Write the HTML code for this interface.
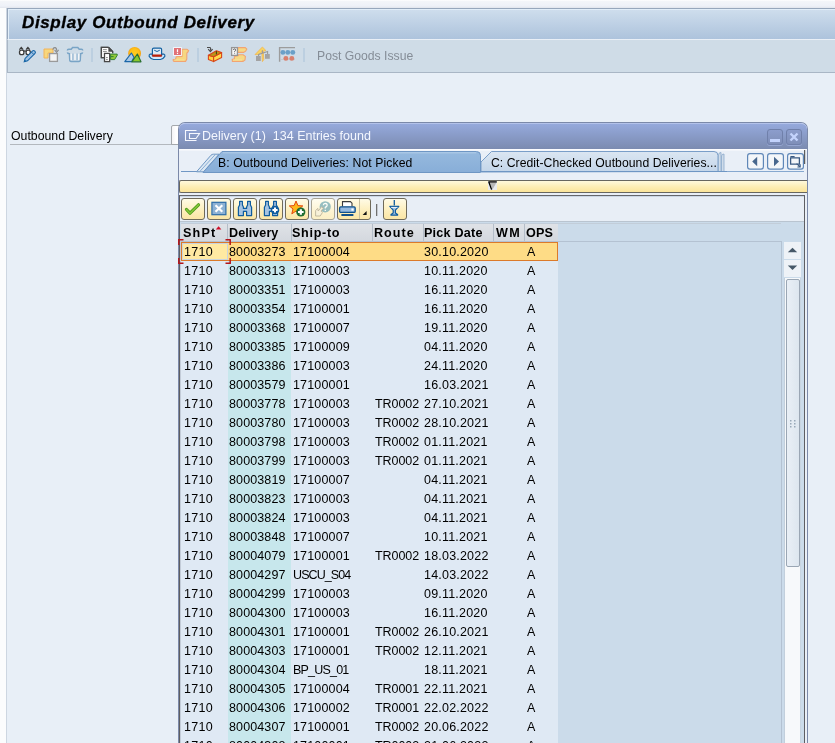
<!DOCTYPE html>
<html><head><meta charset="utf-8">
<style>
*{margin:0;padding:0;box-sizing:border-box}
html,body{width:835px;height:743px;overflow:hidden;background:#fbfcfd;font-family:"Liberation Sans",sans-serif;font-size:12px;color:#000}
.a{position:absolute}
#topstrip{left:0;top:0;width:835px;height:8px;background:linear-gradient(#fefefe 0px,#f3f5f9 1.5px,#eef1f8 6px,#e2e5ec 8px)}
#frame{left:6px;top:8px;width:829px;height:735px;background:#e8eff7;border-left:1px solid #cdd6e1}
#titlebar{left:7px;top:8px;width:828px;height:31px;border-top:1px solid #97a7bc;border-left:1px solid #97a7bc;background:linear-gradient(#cfdeed,#adc3dc)}
#titlebar:before{content:"";position:absolute;left:0;top:0;right:0;height:1px;background:#e2eef9}
#titlebar:after{content:"";position:absolute;left:0;top:0;bottom:0;width:1px;background:#e2eef9}
#title{left:22px;top:13px;font-weight:bold;font-style:italic;font-size:17px;white-space:nowrap;letter-spacing:0.62px;-webkit-text-stroke:0.35px #000}
#toolbar{left:7px;top:39px;width:828px;height:34px;background:#cfdce7;border-top:1px solid #e9eff6;border-bottom:1px solid #a9b6c5;border-left:1px solid #a9b6c5}
.sep{width:1px;height:14px;background:#a9c0d8}
#pgi{left:317px;top:49px;color:#858d97;font-size:12.2px;white-space:nowrap}
#lbl{left:11px;top:129px;font-size:12.3px;white-space:nowrap}
#lblline{left:10px;top:144px;width:168px;height:1px;background:#b3b8be}
#inp{left:171px;top:125px;width:12px;height:20px;background:linear-gradient(to right,#f4f4f6,#fff 40%);border:1px solid #a4a8ac;border-radius:2px 0 0 0}

/* dialog */
#dlg{left:178px;top:122px;width:630px;height:621px;background:#e8eef6;border:1px solid #7b89a9;border-bottom:none;border-radius:7px 7px 0 0}
#dtitle{left:179px;top:123px;width:628px;height:26px;border-radius:6px 6px 0 0;background:linear-gradient(#95a9dc,#7b8bb0);border-top:1px solid #b3c2ea}
#dtitletxt{left:202px;top:129px;color:#f4f7ff;font-size:12.5px;white-space:nowrap}
#dtwhite{left:179px;top:149px;width:628px;height:2px;background:#fbfcfe}

#dtabs{left:179px;top:149px;width:628px;height:594px;background:#e9eff7}
.tabtxt{white-space:nowrap;font-size:12.2px;letter-spacing:0.04px}
#ybar{left:179px;top:180px;width:628px;height:13px;border:1px solid #67665f;border-right:none;border-radius:2px 0 0 2px;background:linear-gradient(#fff9dc 0%,#fdeeb6 50%,#fbe49a 100%)}
#grid{left:179px;top:195px;width:626px;height:548px;border-left:1px solid #5e5e62;border-top:1px solid #66666a;border-right:1px solid #5e5e62;background:#cbdbea}
#gtb{left:180px;top:196px;width:624px;height:26px;background:#e8eef6;border-top:1px solid #cad6e4;border-bottom:1px solid #b9c4d0}
#hline{left:181px;top:223px;width:600px;height:1px;background:#c2cdd9}
.btn{position:absolute;top:198px;height:22px;border:1px solid #6f6a5a;border-radius:3px;background:linear-gradient(#fffbe6,#fdeebb 60%,#fbe6a6)}
#hdr{left:181px;top:224px;width:377px;height:17px;background:linear-gradient(#dfe2e7,#d4d8de)}
.h{position:absolute;top:0;height:18px;font-style:normal;font-weight:bold;font-size:12.6px;line-height:18px;white-space:nowrap;letter-spacing:0.35px}
.hs{position:absolute;top:0;width:1px;height:17px;background:#b4bdc8}
.r{position:absolute;left:181px;width:377px;height:19px;background:linear-gradient(to right,#dfe9f4 47px,#c7e7ec 47px,#c7e7ec 110px,#dfe9f4 110px)}
.r i{position:absolute;top:1px;font-style:normal;font-size:12.5px;line-height:19px;white-space:nowrap;letter-spacing:0.3px}
.c1{left:3px}.c2{left:48px;letter-spacing:0.12px!important}.c3{left:112px;letter-spacing:0.16px!important}.c4{left:194px;letter-spacing:-0.05px!important}.c5{left:243px;letter-spacing:0.2px!important}.c7{left:346px}
.r .bgk{position:absolute;left:47px;top:0;width:63px;height:19px;background:#c7e7ec}
.r.sel{background:#fedc86;border:1px solid #dc7a2a}
.r.sel i{top:0;margin-left:-1px}
.fc{position:absolute;left:0;top:0;width:46px;height:17px;background:#ffe9a2;border:1px solid #c9d3dc}
#gbody{left:181px;top:241px;width:601px;height:502px;border-right:1px solid #b4c2d2;border-top:1px solid #b4c2d2}

.tbtn{width:16px;height:16px;border:1px solid #7080aa;border-radius:3px;background:linear-gradient(#8c9dcc,#7f8fb8);box-shadow:0 1px 0 #95a5d0}
.nbtn{width:17px;height:17px;border:1px solid #6a8cb8;border-radius:2px;background:#fff}
#title,#pgi,#lbl,#dtitletxt,.tabtxt,#hdr,.r{will-change:transform}
</style></head><body>
<div id="topstrip" class="a"></div>
<div id="frame" class="a"></div>
<div id="titlebar" class="a"></div>
<div id="title" class="a">Display Outbound Delivery</div>
<div id="toolbar" class="a"></div>
<div id="pgi" class="a">Post Goods Issue</div>
<div id="lbl" class="a">Outbound Delivery</div>
<div id="lblline" class="a"></div>
<div id="inp" class="a"></div>

<div id="dlg" class="a"></div>
<div id="dtitle" class="a"></div>
<div id="dtitletxt" class="a" style="white-space:pre">Delivery (1)  134 Entries found</div>

<div id="dtabs" class="a"></div>

<svg class="a" style="left:179px;top:149px" width="628" height="31" viewBox="179 149 628 31">
<defs>
<linearGradient id="tbg" x1="0" y1="0" x2="0" y2="1"><stop offset="0" stop-color="#96b9de"/><stop offset="1" stop-color="#88aed8"/></linearGradient>
<linearGradient id="tcg" x1="0" y1="0" x2="0" y2="1"><stop offset="0" stop-color="#dbe6f2"/><stop offset="1" stop-color="#c3d5e9"/></linearGradient>
</defs>
<rect x="179" y="149" width="628" height="1.5" fill="#fbfcfe"/>
<line x1="181" y1="171.5" x2="200" y2="171.5" stroke="#7097c4" stroke-width="1"/>
<line x1="480" y1="171.5" x2="804" y2="171.5" stroke="#86a8cf" stroke-width="1"/>
<!-- ghost tabs left -->
<path d="M196.5 171.8 L211 155.2 Q212 154.2 213.5 154.2 L219 154.2 L203.5 171.8 Z" fill="#dbe7f3" stroke="#6f97c3" stroke-width="1"/>
<path d="M199.8 171.5 L215 154.8" stroke="#88acd3" stroke-width="1"/>

<!-- tab C -->
<path d="M481 172 L481 162 L491.5 151.5 L714 151.5 Q718 151.5 718 155.5 L718 171.5 Z" fill="url(#tcg)" stroke="#7a9ec8" stroke-width="1"/>
<path d="M718.5 171.5 L718.5 155 Q718.5 152.5 721 152.5 L721 171.5 Z" fill="#cfdcea" stroke="#8aa9cc" stroke-width="0.8"/>
<path d="M721.5 171.5 L721.5 156 Q721.5 154 724 154 L724 171.5 Z" fill="#cfdcea" stroke="#8aa9cc" stroke-width="0.8"/>
<line x1="481" y1="171.5" x2="727" y2="171.5" stroke="#6e96c4" stroke-width="1.2"/>
<!-- tab B -->
<path d="M203 172.5 L222 151.5 L476.5 151.5 Q480.5 151.5 480.5 155.5 L480.5 172.5 Z" fill="url(#tbg)" stroke="#6e96c4" stroke-width="1"/>
<line x1="223" y1="152.8" x2="476" y2="152.8" stroke="#b3cde8" stroke-width="1"/>
</svg>
<div class="a tabtxt" style="left:218px;top:156px;letter-spacing:0.1px">B: Outbound Deliveries: Not Picked</div>
<div class="a tabtxt" style="left:491px;top:156px">C: Credit-Checked Outbound Deliveries...</div>
<div id="ybar" class="a"></div>
<div id="grid" class="a"></div>
<div id="gtb" class="a"></div>
<div id="hline" class="a"></div>
<div class="btn" style="left:181px;width:24px"></div>
<div class="btn" style="left:207px;width:24px"></div>
<div class="btn" style="left:233px;width:24px"></div>
<div class="btn" style="left:259px;width:24px"></div>
<div class="btn" style="left:285px;width:24px"></div>
<div class="btn" style="left:311px;width:24px;border-color:#a8a496;background:linear-gradient(#fffdf0,#fdf3d2 60%,#fbefc6)"></div>
<div class="btn" style="left:337px;width:34px"></div>
<div class="btn" style="left:383px;width:24px"></div>
<div id="hdr" class="a">
<i class="h" style="left:2px;letter-spacing:1.2px">ShPt</i>
<i class="h" style="left:48px;letter-spacing:0.05px">Delivery</i>
<i class="h" style="left:111px;letter-spacing:0.7px">Ship-to</i>
<i class="h" style="left:193px;letter-spacing:1px">Route</i>
<i class="h" style="left:243px;letter-spacing:0.22px">Pick Date</i>
<i class="h" style="left:315px;letter-spacing:1.3px">WM</i>
<i class="h" style="left:345px;letter-spacing:0.1px">OPS</i>
<b class="hs" style="left:46px"></b><b class="hs" style="left:110px"></b><b class="hs" style="left:191px"></b><b class="hs" style="left:242px"></b><b class="hs" style="left:312px"></b><b class="hs" style="left:343px"></b>
</div>
<div id="gbody" class="a"></div>
<div class="a" style="left:180px;top:241px;width:1px;height:502px;background:#c3ccd8"></div>
<svg class="a" style="left:215px;top:225px" width="8" height="6" viewBox="0 0 8 6"><path d="M0.8 4.6 L3.6 1.2 L6.4 4.6 Z" fill="#d0102a"/></svg>
<div class="r sel" style="top:242px"><div class="fc"></div><i class="c1">1710</i><i class="c2">80003273</i><i class="c3">17100004</i><i class="c4"></i><i class="c5">30.10.2020</i><i class="c7">A</i></div>
<div class="r" style="top:261px"><i class="c1">1710</i><i class="c2">80003313</i><i class="c3">17100003</i><i class="c4"></i><i class="c5">10.11.2020</i><i class="c7">A</i></div>
<div class="r" style="top:280px"><i class="c1">1710</i><i class="c2">80003351</i><i class="c3">17100003</i><i class="c4"></i><i class="c5">16.11.2020</i><i class="c7">A</i></div>
<div class="r" style="top:299px"><i class="c1">1710</i><i class="c2">80003354</i><i class="c3">17100001</i><i class="c4"></i><i class="c5">16.11.2020</i><i class="c7">A</i></div>
<div class="r" style="top:318px"><i class="c1">1710</i><i class="c2">80003368</i><i class="c3">17100007</i><i class="c4"></i><i class="c5">19.11.2020</i><i class="c7">A</i></div>
<div class="r" style="top:337px"><i class="c1">1710</i><i class="c2">80003385</i><i class="c3">17100009</i><i class="c4"></i><i class="c5">04.11.2020</i><i class="c7">A</i></div>
<div class="r" style="top:356px"><i class="c1">1710</i><i class="c2">80003386</i><i class="c3">17100003</i><i class="c4"></i><i class="c5">24.11.2020</i><i class="c7">A</i></div>
<div class="r" style="top:375px"><i class="c1">1710</i><i class="c2">80003579</i><i class="c3">17100001</i><i class="c4"></i><i class="c5">16.03.2021</i><i class="c7">A</i></div>
<div class="r" style="top:394px"><i class="c1">1710</i><i class="c2">80003778</i><i class="c3">17100003</i><i class="c4">TR0002</i><i class="c5">27.10.2021</i><i class="c7">A</i></div>
<div class="r" style="top:413px"><i class="c1">1710</i><i class="c2">80003780</i><i class="c3">17100003</i><i class="c4">TR0002</i><i class="c5">28.10.2021</i><i class="c7">A</i></div>
<div class="r" style="top:432px"><i class="c1">1710</i><i class="c2">80003798</i><i class="c3">17100003</i><i class="c4">TR0002</i><i class="c5">01.11.2021</i><i class="c7">A</i></div>
<div class="r" style="top:451px"><i class="c1">1710</i><i class="c2">80003799</i><i class="c3">17100003</i><i class="c4">TR0002</i><i class="c5">01.11.2021</i><i class="c7">A</i></div>
<div class="r" style="top:470px"><i class="c1">1710</i><i class="c2">80003819</i><i class="c3">17100007</i><i class="c4"></i><i class="c5">04.11.2021</i><i class="c7">A</i></div>
<div class="r" style="top:489px"><i class="c1">1710</i><i class="c2">80003823</i><i class="c3">17100003</i><i class="c4"></i><i class="c5">04.11.2021</i><i class="c7">A</i></div>
<div class="r" style="top:508px"><i class="c1">1710</i><i class="c2">80003824</i><i class="c3">17100003</i><i class="c4"></i><i class="c5">04.11.2021</i><i class="c7">A</i></div>
<div class="r" style="top:527px"><i class="c1">1710</i><i class="c2">80003848</i><i class="c3">17100007</i><i class="c4"></i><i class="c5">10.11.2021</i><i class="c7">A</i></div>
<div class="r" style="top:546px"><i class="c1">1710</i><i class="c2">80004079</i><i class="c3">17100001</i><i class="c4">TR0002</i><i class="c5">18.03.2022</i><i class="c7">A</i></div>
<div class="r" style="top:565px"><i class="c1">1710</i><i class="c2">80004297</i><i class="c3" style="letter-spacing:-0.9px!important">USCU_S04</i><i class="c4"></i><i class="c5">14.03.2022</i><i class="c7">A</i></div>
<div class="r" style="top:584px"><i class="c1">1710</i><i class="c2">80004299</i><i class="c3">17100003</i><i class="c4"></i><i class="c5">09.11.2020</i><i class="c7">A</i></div>
<div class="r" style="top:603px"><i class="c1">1710</i><i class="c2">80004300</i><i class="c3">17100003</i><i class="c4"></i><i class="c5">16.11.2020</i><i class="c7">A</i></div>
<div class="r" style="top:622px"><i class="c1">1710</i><i class="c2">80004301</i><i class="c3">17100001</i><i class="c4">TR0002</i><i class="c5">26.10.2021</i><i class="c7">A</i></div>
<div class="r" style="top:641px"><i class="c1">1710</i><i class="c2">80004303</i><i class="c3">17100001</i><i class="c4">TR0002</i><i class="c5">12.11.2021</i><i class="c7">A</i></div>
<div class="r" style="top:660px"><i class="c1">1710</i><i class="c2">80004304</i><i class="c3" style="letter-spacing:-0.8px!important">BP_US_01</i><i class="c4"></i><i class="c5">18.11.2021</i><i class="c7">A</i></div>
<div class="r" style="top:679px"><i class="c1">1710</i><i class="c2">80004305</i><i class="c3">17100004</i><i class="c4">TR0001</i><i class="c5">22.11.2021</i><i class="c7">A</i></div>
<div class="r" style="top:698px"><i class="c1">1710</i><i class="c2">80004306</i><i class="c3">17100002</i><i class="c4">TR0001</i><i class="c5">22.02.2022</i><i class="c7">A</i></div>
<div class="r" style="top:717px"><i class="c1">1710</i><i class="c2">80004307</i><i class="c3">17100001</i><i class="c4">TR0002</i><i class="c5">20.06.2022</i><i class="c7">A</i></div>
<div class="r" style="top:736px"><i class="c1">1710</i><i class="c2">80004308</i><i class="c3">17100001</i><i class="c4">TR0002</i><i class="c5">21.06.2022</i><i class="c7">A</i></div>
<!-- dialog title icon -->
<svg class="a" style="left:184px;top:129px" width="18" height="14" viewBox="0 0 18 14">
<path d="M12.5 1.5 H1.5 V11.5 H12.5" fill="none" stroke="#f6f8ff" stroke-width="1.1"/>
<path d="M5.5 4.5 H15.5 L12 9.5 H5.5 Z" fill="none" stroke="#f6f8ff" stroke-width="1.1"/>
</svg>
<!-- title buttons -->
<div class="a tbtn" style="left:767px;top:129px"></div>
<div class="a tbtn" style="left:786px;top:129px"></div>
<div class="a" style="left:770px;top:139px;width:10px;height:3px;background:#c3d3fc"></div>
<svg class="a" style="left:789px;top:132px" width="10" height="10" viewBox="0 0 10 10"><path d="M1.5 1.5 L8.5 8.5 M8.5 1.5 L1.5 8.5" stroke="#c3d3fc" stroke-width="2.4"/></svg>
<!-- nav buttons -->
<svg class="a" style="left:745px;top:150px" width="62" height="24" viewBox="745 150 62 24">
<rect x="747.6" y="153.6" width="15.8" height="15.6" rx="2.4" fill="#f3f6f9" stroke="#5f87b8" stroke-width="1.2"/>
<rect x="767.6" y="153.6" width="15.8" height="15.6" rx="2.4" fill="#f3f6f9" stroke="#5f87b8" stroke-width="1.2"/>
<rect x="787.6" y="153.6" width="15.8" height="15.6" rx="2.4" fill="#f3f6f9" stroke="#5f87b8" stroke-width="1.2"/>
<path d="M752.2 161.5 L757.2 156.8 V166.2 Z" fill="#47678e"/>
<path d="M779 161.5 L774 156.8 V166.2 Z" fill="#47678e"/>
<path d="M790.6 157.8 H799.4 V164.2 H790.6 Z" fill="none" stroke="#3a5a82" stroke-width="1.3"/>
<path d="M790.4 156.6 H794.6" stroke="#3a5a82" stroke-width="1.2"/>
<path d="M796.6 163.6 L799.8 166.6 M800.2 164.2 V167 H797.4" fill="none" stroke="#3a5a82" stroke-width="1.1"/>
<rect x="804" y="150" width="1.2" height="14" fill="#5c5c5c"/>
</svg>
<!-- yellow bar triangle -->
<svg class="a" style="left:488px;top:181px" width="10" height="10" viewBox="0 0 10 10">
<rect x="0" y="0" width="9" height="9" fill="#e9ebef"/>
<path d="M0.5 1 H8.8 L4.5 8.5 Z" fill="#b8b8b8"/>
<path d="M0.3 0.8 H8.8 M0.8 1 L3.6 8.6" stroke="#000" stroke-width="1.3" fill="none"/>
</svg>
<!-- scrollbar -->
<div class="a" style="left:784px;top:242px;width:17px;height:17px;background:#eef2f7"></div>
<div class="a" style="left:784px;top:260px;width:17px;height:17px;background:#eef2f7"></div>
<svg class="a" style="left:784px;top:242px" width="17" height="35" viewBox="0 0 17 35">
<path d="M3.8 10.2 L8.5 5.8 L13.2 10.2 Z" fill="#465868"/>
<path d="M3.8 23.6 L8.5 28 L13.2 23.6 Z" fill="#465868"/>
</svg>
<div class="a" style="left:784px;top:278px;width:17px;height:465px;background:#f7f9fb;border-left:1px solid #c2cfdc;border-right:1px solid #c8d4e0"></div>
<div class="a" style="left:786px;top:279px;width:14px;height:288px;border:1px solid #9aa6b4;border-radius:2px;background:linear-gradient(to right,#e9eff6,#dde6ef)"></div>
<svg class="a" style="left:789px;top:419px" width="9" height="9" viewBox="0 0 9 9" fill="#98a8b8">
<rect x="1" y="1" width="1.5" height="1.5"/><rect x="5" y="1" width="1.5" height="1.5"/>
<rect x="1" y="4" width="1.5" height="1.5"/><rect x="5" y="4" width="1.5" height="1.5"/>
<rect x="1" y="7" width="1.5" height="1.5"/><rect x="5" y="7" width="1.5" height="1.5"/>
</svg>
<!-- focus brackets -->
<svg class="a" style="left:177px;top:238px" width="56" height="28" viewBox="177 238 56 28">
<path d="M178.8 245 V239.8 H183.5 M225.5 239.8 H230.2 V245 M178.8 258 V263.2 H183.5 M225.5 263.2 H230.2 V258" fill="none" stroke="#b3151c" stroke-width="1.5"/>
</svg>

<!-- main toolbar icons -->
<svg class="a" style="left:0;top:40px" width="310" height="32" viewBox="0 40 310 32">
<defs>
<radialGradient id="sun" cx="0.5" cy="0.45" r="0.55"><stop offset="0" stop-color="#ffcc1c"/><stop offset="0.6" stop-color="#ffc018"/><stop offset="1" stop-color="#f0960e"/></radialGradient>
</defs>
<g transform="translate(16,44)">
 <path d="M3.4 5.6 L5.3 3.3 L7.2 5.6 M10 5.6 L11.9 3.3 L13.8 5.6" fill="none" stroke="#3a3a3a" stroke-width="1.1"/>
 <rect x="3.5" y="6.2" width="4.4" height="4.5" rx="2" fill="#fff" stroke="#3c3c3c" stroke-width="1.3"/>
 <rect x="10.1" y="6.2" width="4.2" height="4.5" rx="2" fill="#fff" stroke="#3c3c3c" stroke-width="1.3"/>
 <path d="M7.9 7.4 Q9 6.3 10.1 7.4" fill="none" stroke="#3c3c3c" stroke-width="1.2"/>
 <g transform="translate(8.2,17.8) rotate(-45)">
  <path d="M0 0 L3 -1.7 H13.6 Q15 -1.7 15 0 Q15 1.7 13.6 1.7 H3 Z" fill="#9cc0e4" stroke="#1866a6" stroke-width="1.1"/>
  <path d="M0 0 L2 -1.1 V1.1 Z" fill="#1866a6"/>
  <line x1="12" y1="-1.7" x2="12" y2="1.7" stroke="#1866a6" stroke-width="0.9"/>
 </g>
</g>
<g transform="translate(40,44)">
 <path d="M4 5 H13 V9 H8 V14 H4 Z" fill="#f7d77c" stroke="#f2b45a" stroke-width="1"/>
 <rect x="9.6" y="9.6" width="7.8" height="7.8" fill="#f4f4f4" stroke="#9a9a9a" stroke-width="1.3"/>
 <path d="M12.8 5.6 Q13.5 3.2 15.2 3.6 Q16.8 4 16.6 6.8" fill="none" stroke="#8c8c8c" stroke-width="1.2"/>
 <path d="M14.6 5.9 L16.6 8.3 L18.6 5.9" fill="none" stroke="#8c8c8c" stroke-width="1.1"/>
</g>
<g transform="translate(64,44)" fill="none" stroke="#79a4c6" stroke-width="1.5">
 <path d="M3.4 6.4 Q3.4 5.3 4.6 5.3 H7.2 L8.6 3.6 H13.8 L15.2 5.3 H17.6 Q18.7 5.3 18.7 6.4"/>
 <path d="M3.4 8.4 Q3.6 9.6 5.4 9.8 L5.8 16.4 Q5.9 17.4 7 17.4 H15 Q16.1 17.4 16.2 16.4 L16.6 9.8 Q18.4 9.6 18.6 8.4"/>
 <path d="M8.9 9.5 V16.2 M13.1 9.5 V16.2" stroke="#a6c2da" stroke-width="1.6"/>
 <path d="M7.2 9.8 V16 M11 9.8 V16 M14.8 9.8 V16" stroke="#fbfbfb" stroke-width="1.2"/>
</g>
<rect x="91.5" y="48" width="1" height="14" fill="#aac1d9"/>
<g transform="translate(98,44)">
 <path d="M10.6 3.4 H3.4 V13.6 H6.4 M10.6 3.4 L14.6 7.6 V9.2" fill="#fff" stroke="#474747" stroke-width="1.3"/>
 <path d="M3.4 3.4 H10.6 L14.6 7.6 V9.4 H6.4 V13.6 H3.4 Z" fill="#fff"/>
 <path d="M10.6 3.4 H3.4 V13.6 H6.4 M10.6 3.4 L14.6 7.6 V9.2" fill="none" stroke="#474747" stroke-width="1.3"/>
 <path d="M10.4 3.6 L14.4 7.8 H10.4 Z" fill="#474747"/>
 <path d="M5 5.6 H8.8 M5 7.5 H8.8" stroke="#8a8a8a" stroke-width="0.9"/>
 <rect x="6.5" y="9.4" width="5.2" height="8.2" fill="#fff" stroke="#474747" stroke-width="1.3"/>
 <path d="M8 13.6 H9.8 M8 15.6 H9.8" stroke="#777" stroke-width="0.9"/>
 <path d="M12.6 10.1 H19.2 V11.4 L16.6 15.6 H12.6 Z" fill="#90c83a" stroke="#2a7a2e" stroke-width="0.9"/>
 <path d="M13 12.6 H15.6" stroke="#2a7a2e" stroke-width="0.9"/>
</g>
<g transform="translate(122,44)">
 <circle cx="12.6" cy="9.4" r="6.4" fill="url(#sun)"/>
 <path d="M2.8 17.6 L9.4 9 L12 13.2 L9.8 17.6 Z" fill="#a8c8e6" stroke="#1a66a8" stroke-width="1.15" stroke-linejoin="round"/>
 <path d="M9.8 17.8 L15.4 10 L19 17.8 Z" fill="#8ac82c" stroke="#2b7030" stroke-width="1.15" stroke-linejoin="round"/>
</g>
<g transform="translate(146,44)">
 <path d="M4 10.2 Q2.8 10.6 3.2 12.4 Q4.8 15 7.6 15.5 H14.4 Q17.2 15 18.8 12.4 Q19.2 10.6 18 10.2 Z" fill="#d4e8fa" stroke="#1462a2" stroke-width="1.2"/>
 <path d="M6.4 11.6 V5.6 Q6.4 4.2 7.8 4.2 H14.2 Q15.6 4.2 15.6 5.6 V11.6 Z" fill="#dfeaf5" stroke="#1462a2" stroke-width="1.2"/>
 <path d="M8.2 6.2 Q11 8.8 13.8 6.2" fill="none" stroke="#1462a2" stroke-width="1"/>
 <path d="M6.2 10.6 H15.8 V12.2 Q15.6 12.7 14.6 12.7 H7.4 Q6.4 12.7 6.2 12.2 Z" fill="#bf1f06"/>
</g>
<g transform="translate(170,44)">
 <path d="M12 5.3 H17 L18.6 6.6 L17.6 8.5 L16.8 9 V15 L15.6 17.4 H4 Q2.8 17 3.2 15.6 L5.6 15.2 L6.2 12.8 L12 12.4 Z" fill="#f6d780" stroke="#f2a472" stroke-width="1.1"/>
 <path d="M4.4 16 H14.6" stroke="#f8e49a" stroke-width="0.9"/>
 <rect x="3.2" y="3.2" width="8.6" height="8.6" fill="#fafcff"/>
 <rect x="4" y="4" width="7" height="7" fill="#e17276"/>
 <path d="M7.5 5.2 V8.2 M7.5 9 V10" stroke="#fff" stroke-width="1.2"/>
</g>
<rect x="197.5" y="48" width="1" height="14" fill="#aac1d9"/>
<g transform="translate(204,44)">
 <path d="M3 3.5 H6 Q7 3.8 6.5 6.6" fill="none" stroke="#4c4c4c" stroke-width="1.2"/>
 <path d="M4.2 5.2 L6.4 7.6 L8.6 5.2" fill="none" stroke="#4c4c4c" stroke-width="1.2"/>
 <path d="M4.4 11.2 L9.6 12.8 V17.6 L4.4 15.6 Z" fill="#ffd040" stroke="#d8461a" stroke-width="1.1" stroke-linejoin="round"/>
 <path d="M9.6 12.8 L17.6 8.6 V13.6 L9.6 17.6 Z" fill="#ffda4a" stroke="#d8461a" stroke-width="1.1" stroke-linejoin="round"/>
 <path d="M4.4 11.2 L12.4 6.8 L17.6 8.6 L9.6 12.8 Z" fill="#b89818" stroke="#d8461a" stroke-width="1.1" stroke-linejoin="round"/>
 <path d="M12.4 7.2 V10.4" stroke="#3c3a10" stroke-width="1"/>
</g>
<g transform="translate(228,44)">
 <path d="M9.8 3.6 H17.2 L18.8 5 L17.6 7.2 L15.6 8.4 H9.8 Z" fill="#f5da86" stroke="#f2a472" stroke-width="1.1"/>
 <path d="M10.4 10.8 H15.2 L17.4 12.4 L17 16 L15 17.4 H4.4 L4.2 15.4 L6.4 14.8 V12.4 L10.4 11.6 Z" fill="#f6da84" stroke="#f2a472" stroke-width="1.1"/>
 <path d="M5 16 H14" stroke="#f8e6a0" stroke-width="0.9"/>
 <rect x="3.6" y="3.6" width="5.8" height="7.8" fill="#f8f8f8" stroke="#959595" stroke-width="1.3"/>
 <path d="M5.3 6 Q5.6 4.9 6.6 4.9 Q7.8 5 7.6 6.2 Q7.4 7 6.6 7.4 V8.2 M6.6 9.2 V9.8" fill="none" stroke="#555" stroke-width="0.9"/>
</g>
<g transform="translate(252,44)">
 <path d="M10.4 3 L3 10.6 H6.6 L9.8 7.6 L10.4 17.6 L11.8 15.6 L11.2 7.4 L13.8 6.4 Z" fill="#f8d462" stroke="#f3b64e" stroke-width="0.8" stroke-linejoin="round"/>
 <path d="M6.6 12 V10.4 L15.6 7.4 V10.2 M10.4 6.2 V9" fill="none" stroke="#9a9a9a" stroke-width="1.1"/>
 <rect x="4" y="12" width="4.8" height="5" fill="#a3a3a3"/>
 <rect x="13" y="10" width="4.8" height="4.8" fill="#a3a3a3"/>
</g>
<g transform="translate(276,44)">
 <path d="M3.6 17.8 V3.6 H19" fill="none" stroke="#9c9c9c" stroke-width="1.4"/>
 <path d="M4 8.3 H19 M4 15.5 H19" stroke="#c0c6cc" stroke-width="0.8"/>
 <circle cx="6.9" cy="8.4" r="2.45" fill="#6aa0c8"/>
 <circle cx="11.8" cy="8.4" r="2.45" fill="#6aa0c8"/>
 <circle cx="16.8" cy="8.4" r="2.45" fill="#6aa0c8"/>
 <circle cx="9.9" cy="14.4" r="2.45" fill="#d8806e"/>
 <circle cx="15.8" cy="14.4" r="2.45" fill="#d8806e"/>
</g>
<rect x="303.5" y="48" width="1" height="14" fill="#aac1d9"/>
</svg>
<!-- grid toolbar icons -->
<svg class="a" style="left:181px;top:198px" width="230" height="22" viewBox="181 198 230 22">
<g transform="translate(181,198)">
 <path d="M5.5 11.5 L9 15.2 L17.5 6.8" fill="none" stroke="#4c9a1c" stroke-width="3.2" stroke-linejoin="round" stroke-linecap="round"/>
 <path d="M5.5 11.5 L9 15.2 L17.5 6.8" fill="none" stroke="#86c83a" stroke-width="1.6" stroke-linejoin="round" stroke-linecap="round"/>
</g>
<g transform="translate(207,198)">
 <rect x="4.3" y="3.7" width="15.2" height="13.6" fill="#2f6ea8"/>
 <rect x="5.5" y="4.9" width="12.8" height="11.2" fill="#8eb2d4"/>
 <path d="M8.5 7.3 L15.3 13.7 M15.3 7.3 L8.5 13.7" stroke="#fff" stroke-width="2.2"/>
</g>
<g transform="translate(233,198)">
 <path d="M6.6 3.4 H9.4 V7 L10.4 9 V10.4 H13.6 V9 L14.6 7 V3.4 H17.4 V7 L18.6 9.2 V17.6 H13.6 V13.4 H10.4 V17.6 H5.4 V9.2 L6.6 7 Z" fill="#a6c4e2" stroke="#0f5c9e" stroke-width="1.2" stroke-linejoin="round"/>
</g>
<g transform="translate(259,198)">
 <path d="M6.6 3.4 H9.4 V7 L10.4 9 V10.4 H13.6 V9 L14.6 7 V3.4 H17.4 V7 L18.6 9.2 V17.6 H13.6 V13.4 H10.4 V17.6 H5.4 V9.2 L6.6 7 Z" fill="#a6c4e2" stroke="#0f5c9e" stroke-width="1.2" stroke-linejoin="round"/>
 <circle cx="16" cy="12" r="4.3" fill="#0f5c9e"/>
 <path d="M16 9.4 V14.6 M13.4 12 H18.6" stroke="#fff" stroke-width="2"/>
</g>
<g transform="translate(285,198)">
 <path d="M11 3 L12.9 7.6 L17.8 7.9 L14.1 11 L15.3 15.8 L11 13.1 L6.8 15.8 L8 11 L4.3 7.9 L9.1 7.6 Z" fill="#ffb81a" stroke="#e2460e" stroke-width="1" stroke-linejoin="round"/>
 <circle cx="15.8" cy="14" r="4.6" fill="#1f6e32"/>
 <path d="M15.8 11.2 V16.8 M13 14 H18.6" stroke="#fff" stroke-width="2.2"/>
</g>
<g transform="translate(311,198)" opacity="0.75">
 <circle cx="14.2" cy="8.8" r="5.6" fill="#74aab4"/>
 <path d="M12.3 7.3 Q12.4 5.4 14.3 5.4 Q16.3 5.5 16.1 7.4 Q15.9 8.6 14.3 9.4 V10.6 M14.3 11.8 V13" fill="none" stroke="#fff" stroke-width="1.3"/>
 <path d="M4.6 18 V12.5 L6.8 10.4 L7.2 13 L10.6 8.8 L12.4 10.2 L10 13 L11.4 14.6 L9.2 18 Z" fill="#f6f0dc" stroke="#a8a08a" stroke-width="0.9" stroke-linejoin="round"/>
</g>
<g transform="translate(337,198)">
 <path d="M5.5 8.5 V3.6 H13.4 L15 5.2 V8.5" fill="#fff" stroke="#3a3a3a" stroke-width="1.1"/>
 <rect x="2.6" y="8.8" width="15.6" height="5.6" rx="1.2" fill="#94b8de" stroke="#0f508c" stroke-width="1.3"/>
 <rect x="14.4" y="10.5" width="2.2" height="2.2" fill="#fff"/>
 <rect x="4.4" y="16" width="12" height="2" fill="#0f508c"/>
 <line x1="22.5" y1="1" x2="22.5" y2="21" stroke="#c8bfa0" stroke-width="1"/>
 <path d="M25.6 17 L29.6 13 V17 Z" fill="#111"/>
</g>
<rect x="376" y="204" width="1.3" height="12" fill="#707070"/>
<g transform="translate(383,198)">
 <path d="M11.3 2 V7.6" stroke="#0f5c9e" stroke-width="1.3"/>
 <path d="M6.8 8.4 H15.8 L12.4 12.2 V15 L14.6 16.4 V17.2 H8 V16.4 L10.2 15 V12.2 Z" fill="#a6c4e2" stroke="#0f5c9e" stroke-width="1.2" stroke-linejoin="round"/>
 <path d="M8 9.4 H14.6" stroke="#fff" stroke-width="0.8"/>
</g>
</svg>

</body></html>
